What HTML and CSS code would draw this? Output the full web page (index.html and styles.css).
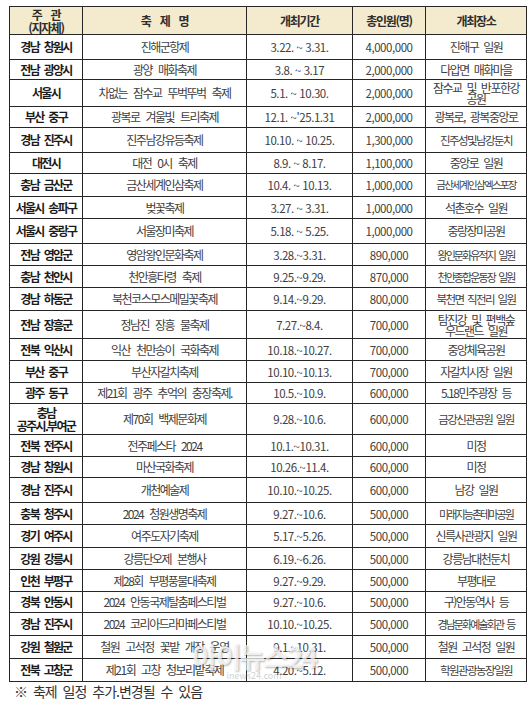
FILE: index.html
```html
<!DOCTYPE html>
<html lang="ko">
<head>
<meta charset="utf-8">
<link rel="stylesheet" href="styles.css">
</head>
<body>
<div class="page">
  <table class="fest">
    <colgroup>
      <col class="c1"><col class="c2"><col class="c3"><col class="c4"><col class="c5">
    </colgroup>
    <thead>
      <tr class="hd">
        <th class="ws">주 관<br>(지자체)</th>
        <th class="ws">축 제 명</th>
        <th>개최기간</th>
        <th>총인원(명)</th>
        <th>개최장소</th>
      </tr>
    </thead>
    <tbody>
      <tr class="h25"><td>경남 창원시</td><td>진해군항제</td><td class="n">3.22. ~ 3.31.</td><td class="n">4,000,000</td><td>진해구 일원</td></tr>
      <tr class="h20"><td>전남 광양시</td><td>광양 매화축제</td><td class="n">3.8. ~ 3.17</td><td class="n">2,000,000</td><td>다압면 매화마을</td></tr>
      <tr class="h27"><td>서울시</td><td>차없는 잠수교 뚜벅뚜벅 축제</td><td class="n">5.1. ~ 10.30.</td><td class="n">2,000,000</td><td class="two">잠수교 및 반포한강<br>공원</td></tr>
      <tr class="h21"><td>부산 중구</td><td>광복로 겨울빛 트리축제</td><td class="n">12.1. ~'25.1.31</td><td class="n">2,000,000</td><td>광복로, 광복중앙로</td></tr>
      <tr class="h25"><td>경남 진주시</td><td>진주남강유등축제</td><td class="n">10.10. ~ 10.25.</td><td class="n">1,300,000</td><td class="t2">진주성및남강둔치</td></tr>
      <tr class="h21"><td>대전시</td><td>대전 0시 축제</td><td class="n">8.9. ~ 8.17.</td><td class="n">1,100,000</td><td>중앙로 일원</td></tr>
      <tr class="h23"><td>충남 금산군</td><td>금산세계인삼축제</td><td class="n">10.4. ~ 10.13.</td><td class="n">1,000,000</td><td class="t0">금산세계인삼엑스포장</td></tr>
      <tr class="h22"><td>서울시 송파구</td><td>벚꽃축제</td><td class="n">3.27. ~ 3.31.</td><td class="n">1,000,000</td><td>석촌호수 일원</td></tr>
      <tr class="h25"><td>서울시 중랑구</td><td>서울장미축제</td><td class="n">5.18. ~ 5.25.</td><td class="n">1,000,000</td><td>중랑장미공원</td></tr>
      <tr class="h22"><td>전남 영암군</td><td>영암왕인문화축제</td><td class="n">3.28.~3.31.</td><td class="n">890,000</td><td class="t1">왕인문화유적지 일원</td></tr>
      <tr class="h22"><td>충남 천안시</td><td>천안흥타령 축제</td><td class="n">9.25.~9.29.</td><td class="n">870,000</td><td class="t1">천안종합운동장 일원</td></tr>
      <tr class="h23"><td>경남 하동군</td><td>북천코스모스메밀꽃축제</td><td class="n">9.14.~9.29.</td><td class="n">800,000</td><td class="t2">북천면 직전리 일원</td></tr>
      <tr class="h28"><td>전남 장흥군</td><td>정남진 장흥 물축제</td><td class="n">7.27.~8.4.</td><td class="n">700,000</td><td class="two">탐진강 및 편백숲<br>우드랜드 일원</td></tr>
      <tr class="h22"><td>전북 익산시</td><td>익산 천만송이 국화축제</td><td class="n">10.18.~10.27.</td><td class="n">700,000</td><td>중앙체육공원</td></tr>
      <tr class="h22"><td>부산 중구</td><td>부산자갈치축제</td><td class="n">10.10.~10.13.</td><td class="n">700,000</td><td>자갈치시장 일원</td></tr>
      <tr class="h21"><td>광주 동구</td><td>제21회 광주 추억의 충장축제.</td><td class="n">10.5.~10.9.</td><td class="n">600,000</td><td>5.18민주광장 등</td></tr>
      <tr class="h31"><td class="two2">충남<br>공주시.부여군</td><td>제70회 백제문화제</td><td class="n">9.28.~10.6.</td><td class="n">600,000</td><td class="t2">금강신관공원 일원</td></tr>
      <tr class="h22"><td>전북 전주시</td><td>전주페스타 2024</td><td class="n">10.1.~10.31.</td><td class="n">600,000</td><td>미정</td></tr>
      <tr class="h21"><td>경남 창원시</td><td>마산국화축제</td><td class="n">10.26.~11.4.</td><td class="n">600,000</td><td>미정</td></tr>
      <tr class="h25"><td>경남 진주시</td><td>개천예술제</td><td class="n">10.10.~10.25.</td><td class="n">600,000</td><td>남강 일원</td></tr>
      <tr class="h22"><td>충북 청주시</td><td>2024 청원생명축제</td><td class="n">9.27.~10.6.</td><td class="n">500,000</td><td class="t1">미래지능촌테마공원</td></tr>
      <tr class="h23"><td>경기 여주시</td><td>여주도자기축제</td><td class="n">5.17.~5.26.</td><td class="n">500,000</td><td>신륵사관광지 일원</td></tr>
      <tr class="h22"><td>강원 강릉시</td><td>강릉단오제 본행사</td><td class="n">6.19.~6.26.</td><td class="n">500,000</td><td>강릉남대천둔치</td></tr>
      <tr class="h22"><td>인천 부평구</td><td>제28회 부평풍물대축제</td><td class="n">9.27.~9.29.</td><td class="n">500,000</td><td>부평대로</td></tr>
      <tr class="h21"><td>경북 안동시</td><td>2024 안동국제탈춤페스티벌</td><td class="n">9.27.~10.6.</td><td class="n">500,000</td><td>구)안동역사 등</td></tr>
      <tr class="h23"><td>경남 진주시</td><td>2024 코리아드라마페스티벌</td><td class="n">10.10.~10.25.</td><td class="n">500,000</td><td class="t1">경남문화예술회관 등</td></tr>
      <tr class="h23"><td>강원 철원군</td><td>철원 고석정 꽃밭 개장 운영</td><td class="n">9.1.~10.31.</td><td class="n">500,000</td><td>철원 고석정 일원</td></tr>
      <tr class="h23"><td>전북 고창군</td><td>제21회 고창 청보리밭축제</td><td class="n">4.20.~5.12.</td><td class="n">500,000</td><td class="t2">학원관광농장일원</td></tr>
    </tbody>
  </table>
  <p class="note">※ 축제 일정 추가.변경될 수 있음</p>
  <div class="wm"><span class="wm-big">아이뉴스24</span><span class="wm-small">inews24.com</span></div>
</div>
</body>
</html>
```
FILE: styles.css
```css
html, body {
  margin: 0;
  padding: 0;
  background: #ffffff;
}

body {
  font-family: "Noto Sans CJK KR", "Noto Sans", sans-serif;
  color: #404040;
}

.page {
  position: relative;
  padding: 6px 0 0 9px;
  width: 523px;
  height: 702px;
  overflow: hidden;
}

.fest {
  border-collapse: collapse;
  table-layout: fixed;
  width: 517px;
}

.c1 { width: 73px; }
.c2 { width: 164px; }
.c3 { width: 106px; }
.c4 { width: 73px; }
.c5 { width: 101px; }

.fest th,
.fest td {
  border: 1px solid #262626;
  padding: 0;
  text-align: center;
  vertical-align: middle;
  white-space: nowrap;
  overflow: hidden;
}

.fest th {
  background: #f4eacd;
  color: #2e2e2e;
  font-weight: 700;
  font-size: 12px;
  letter-spacing: -1.3px;
  line-height: 13px;
  height: 27px;
}

.fest th.ws {
  word-spacing: 7px;
}

.fest td {
  font-size: 12px;
  letter-spacing: -1.5px;
  word-spacing: 4px;
  line-height: 12px;
}

.fest td:first-child {
  font-weight: 700;
  color: #1c1c1c;
  font-size: 12px;
  letter-spacing: -1.7px;
  word-spacing: 3px;
}

.fest td:nth-child(5) {
  font-size: 12px;
  letter-spacing: -1.5px;
  word-spacing: 3px;
}

.fest td.n {
  font-size: 11.5px;
  letter-spacing: -0.45px;
  word-spacing: 0;
}

.fest td.two {
  line-height: 11px;
}

.fest td.two2 {
  line-height: 13px;
}

.fest td.t0 {
  font-size: 10.5px;
  letter-spacing: -1.7px;
}

.fest td.t1 {
  font-size: 11px;
  letter-spacing: -1.9px;
  word-spacing: 2px;
}

.fest td.t2 {
  font-size: 11.5px;
  letter-spacing: -1.6px;
  word-spacing: 2px;
}

.h20 td { height: 19px; }
.h21 td { height: 20px; }
.h22 td { height: 21px; }
.h23 td { height: 22px; }
.h25 td { height: 24px; }
.h27 td { height: 26px; }
.h28 td { height: 27px; }
.h31 td { height: 30px; }

.note {
  margin: 1px 0 0 5px;
  font-size: 14px;
  letter-spacing: -1px;
  word-spacing: 3px;
  color: #333333;
  line-height: 16px;
}

.wm {
  position: absolute;
  left: 192px;
  top: 641px;
  display: flex;
  flex-direction: column;
  align-items: center;
  pointer-events: none;
}

.wm-big {
  font-size: 28px;
  font-weight: 700;
  letter-spacing: -2px;
  color: rgba(255, 255, 255, 0.72);
  text-shadow: 1px 1px 2px rgba(0, 0, 0, 0.28);
  line-height: 30px;
}

.wm-small {
  font-size: 9px;
  color: rgba(160, 160, 160, 0.5);
  line-height: 10px;
  letter-spacing: 0;
}
```
